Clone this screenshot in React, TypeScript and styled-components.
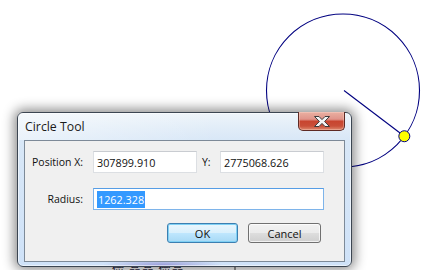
import React from "react";
import styled, { createGlobalStyle } from "styled-components";

const Global = createGlobalStyle`
  html, body { margin: 0; padding: 0; background: #ffffff; }
  body { width: 422px; height: 270px; overflow: hidden; font-family: "Open Sans", "Noto Sans", sans-serif; }
`;

const Desktop = styled.div`
  position: relative;
  width: 422px;
  height: 270px;
  background: #ffffff;
  overflow: hidden;
`;

const Canvas = styled.svg`
  position: absolute;
  left: 0;
  top: 0;
`;

const BehindText = styled.div`
  position: absolute;
  left: 112px;
  top: 262px;
  font-family: "Noto Sans CJK SC", sans-serif;
  font-size: 12px;
  line-height: 14px;
  letter-spacing: 1px;
  color: #2a2440;
`;

const Window = styled.div`
  position: absolute;
  left: 17px;
  top: 112px;
  width: 335px;
  height: 155px;
  box-sizing: border-box;
  display: flex;
  flex-direction: column;
  border: 1px solid #3c4652;
  border-radius: 6px;
  background:
    radial-gradient(ellipse 60px 6px at 145px 152px, rgba(110, 100, 190, 0.55), rgba(110, 100, 190, 0) 100%),
    linear-gradient(to bottom, #eef4fa 0px, #e2edf8 14px, #d8e7f7 28px, #cfe2f8 100%);
  box-shadow:
    inset 0 0 0 1px rgba(255, 255, 255, 0.55),
    0 0 12px 3px rgba(0, 0, 0, 0.45);
`;

const TitleBar = styled.div`
  height: 27px;
  display: flex;
  align-items: flex-start;
  padding-left: 7px;
  padding-right: 6px;
  background: linear-gradient(to right, rgba(255,255,255,0.45), rgba(255,255,255,0) 60%);
  border-radius: 5px 5px 0 0;
`;

const Title = styled.div`
  flex: 1;
  padding-top: 6px;
  font-size: 12.3px;
  line-height: 16px;
  color: #1b1b1b;
  text-shadow: 0 0 6px rgba(255, 255, 255, 0.9);
`;

const CloseButton = styled.div`
  width: 47px;
  height: 19px;
  margin-top: -1px;
  box-sizing: border-box;
  display: flex;
  align-items: center;
  justify-content: center;
  border: 1px solid #5e2a24;
  border-top: none;
  border-radius: 0 0 5px 5px;
  background: linear-gradient(
    to bottom,
    #eab0a2 0%,
    #e0948a 40%,
    #c8452f 52%,
    #c94f38 78%,
    #de8a6f 100%
  );
  box-shadow: inset 0 0 0 1px rgba(255, 220, 210, 0.35);
`;

const Client = styled.div`
  height: 122px;
  margin: 0 6px;
  box-sizing: border-box;
  border: 1px solid #7d8a98;
  background: #f0f0f0;
  display: flex;
  flex-direction: column;
  padding-top: 10px;
`;

const Form = styled.div`
  display: grid;
  grid-template-columns: 68px 104px 23px 104px;
  grid-auto-rows: 22px;
  row-gap: 15px;
  align-items: center;
`;

const Label = styled.div<{ $align?: "left" | "right" }>`
  font-size: 10.5px;
  color: #111;
  text-align: ${(p) => (p.$align === "left" ? "left" : "right")};
  padding-right: ${(p) => (p.$align === "left" ? "0" : "10px")};
  padding-left: ${(p) => (p.$align === "left" ? "5px" : "0")};
`;

const TextBox = styled.div<{ $span?: boolean; $focused?: boolean }>`
  grid-column: ${(p) => (p.$span ? "2 / 5" : "auto")};
  height: 22px;
  box-sizing: border-box;
  background: #ffffff;
  border: 1px solid ${(p) => (p.$focused ? "#7eb4ea" : "#dcdfe3")};
  border-top-color: ${(p) => (p.$focused ? "#569de5" : "#c9ccd1")};
  display: flex;
  align-items: center;
  padding: 0 3px;
  font-size: 10.8px;
  color: #111;
`;

const Selected = styled.span`
  background: #3399ff;
  color: #ffffff;
  line-height: 17px;
  padding: 0 1px;
`;

const ButtonRow = styled.div`
  display: flex;
  justify-content: flex-end;
  gap: 10px;
  margin-top: 13px;
  padding-right: 23px;
`;

const Button = styled.div<{ $default?: boolean; $w: number }>`
  width: ${(p) => p.$w}px;
  height: 20px;
  box-sizing: border-box;
  border-radius: 3px;
  display: flex;
  align-items: center;
  justify-content: center;
  font-size: 11px;
  color: #111;
  border: 1px solid ${(p) => (p.$default ? "#3c7fb1" : "#707070")};
  background: ${(p) =>
    p.$default
      ? "linear-gradient(to bottom, #eaf6fd 0%, #d9f0fc 48%, #bee6fd 52%, #a7d9f5 100%)"
      : "linear-gradient(to bottom, #f2f2f2 0%, #ebebeb 48%, #dddddd 52%, #cfcfcf 100%)"};
  box-shadow: ${(p) =>
    p.$default
      ? "inset 0 0 0 1px #7fd0f4"
      : "inset 0 0 0 1px rgba(255,255,255,0.7)"};
`;

const CloseGlyph = () => (
  <svg width="18" height="13" viewBox="0 0 18 13">
    <path
      d="M1.5 1.5 H6 L9 4.6 L12 1.5 H16.5 L11.6 6.5 L16.5 11.5 H12 L9 8.4 L6 11.5 H1.5 L6.4 6.5 Z"
      fill="#f4f4f4"
      stroke="#3b3b3b"
      strokeWidth="1"
      strokeLinejoin="round"
    />
  </svg>
);

export default function App() {
  const cx = 343;
  const cy = 90.5;
  const r = 76.5;
  const dx = 63;
  const dy = 47;
  const len = Math.sqrt(dx * dx + dy * dy);
  const px = cx + (dx / len) * r;
  const py = cy + (dy / len) * r;
  return (
    <>
      <Global />
      <Desktop>
        <Canvas width="422" height="270" viewBox="0 0 422 270">
          <circle cx={cx} cy={cy} r={r} fill="none" stroke="#000080" strokeWidth="1.1" />
          <line x1={cx + 1} y1={cy} x2={px} y2={py} stroke="#000080" strokeWidth="1.1" />
          <line x1="235" y1="262" x2="235" y2="270" stroke="#333" strokeWidth="1" />
          <circle cx={px} cy={py} r="5.5" fill="#ffff00" stroke="#000080" strokeWidth="1" />
        </Canvas>
        <BehindText>俭 晶晶 俭晶</BehindText>
        <Window>
          <TitleBar>
            <Title>Circle Tool</Title>
            <CloseButton>
              <CloseGlyph />
            </CloseButton>
          </TitleBar>
          <Client>
            <Form>
              <Label>Position X:</Label>
              <TextBox>307899.910</TextBox>
              <Label $align="left">Y:</Label>
              <TextBox>2775068.626</TextBox>
              <Label>Radius:</Label>
              <TextBox $span $focused>
                <Selected>1262.328</Selected>
              </TextBox>
            </Form>
            <ButtonRow>
              <Button $default $w={71}>OK</Button>
              <Button $w={73}>Cancel</Button>
            </ButtonRow>
          </Client>
        </Window>
      </Desktop>
    </>
  );
}
